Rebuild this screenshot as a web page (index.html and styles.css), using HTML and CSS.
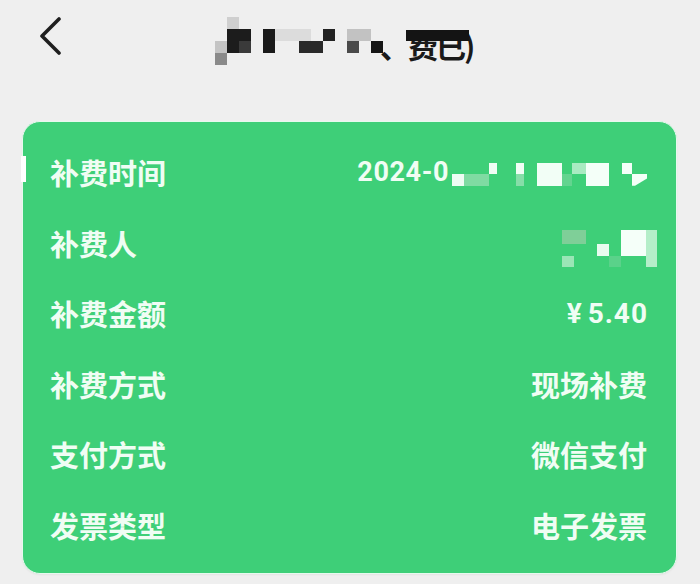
FILE: index.html
```html
<!DOCTYPE html>
<html lang="zh-CN">
<head>
<meta charset="utf-8">
<link rel="stylesheet" href="styles.css">
</head>
<body>
<div class="page">
  <header class="topbar">
    <svg class="back" width="26" height="38" viewBox="0 0 26 38"><path d="M22 2 L5 19 L22 36" fill="none" stroke="#1f1f1f" stroke-width="3.6" stroke-linecap="round" stroke-linejoin="round"/></svg>
    <div class="title">
      <div class="mosaic tmos">
        <i class="t1"></i><i class="t2"></i><i class="t3"></i><i class="t4"></i><i class="t5"></i><i class="t6"></i><i class="t7"></i><i class="t8"></i><i class="t9"></i><i class="t10"></i><i class="t11"></i><i class="t12"></i>
      </div>
      <span class="title-text">、<span class="censored">费已)</span></span>
    </div>
  </header>
  <section class="card">
    <span class="edge-mark"></span>
    <div class="row"><span class="label">补费时间</span><span class="value"><span class="date">2024-0</span><span class="mosaic vmos1"><i class="a1"></i><i class="a2"></i><i class="a3"></i><i class="a4"></i><i class="a5"></i><i class="a6"></i><i class="a7"></i><i class="a8"></i><i class="a9"></i><i class="a10"></i><i class="a11"></i></span></span></div>
    <div class="row"><span class="label">补费人</span><span class="value"><span class="mosaic vmos2"><i class="b1"></i><i class="b2"></i><i class="b3"></i><i class="b4"></i><i class="b5"></i><i class="b6"></i></span></span></div>
    <div class="row"><span class="label">补费金额</span><span class="value"><span class="yen">¥</span><span class="num">5.40</span></span></div>
    <div class="row"><span class="label">补费方式</span><span class="value">现场补费</span></div>
    <div class="row"><span class="label">支付方式</span><span class="value">微信支付</span></div>
    <div class="row"><span class="label">发票类型</span><span class="value">电子发票</span></div>
  </section>
</div>
</body>
</html>
```
FILE: styles.css
```css
html, body {
  margin: 0;
  padding: 0;
  background: #efefef;
  font-family: Roboto, "Noto Sans CJK SC", sans-serif;
}
.page {
  width: 700px;
  height: 584px;
  overflow: hidden;
}
.topbar {
  height: 121px;
  display: flex;
  align-items: flex-start;
}
.back {
  margin: 17px 0 0 37px;
}
.title {
  margin: 17px 0 0 152px;
  display: flex;
  align-items: flex-start;
}
.mosaic { display: grid; }
.mosaic i { display: block; }

/* title mosaic: 14 cols x 12px, 4 rows x 12px */
.tmos {
  grid-template-columns: repeat(14, 12px);
  grid-template-rows: repeat(4, 12px);
}
.t1 { grid-column: 2; grid-row: 1; background: #cfcfcf; }
.t2 { grid-column: 1; grid-row: 3; background: #c4c4c4; }
.t3 { grid-column: 1; grid-row: 4; background: #8a8a8a; }
.t4 { grid-column: 2 / 4; grid-row: 2 / 4; background: #1c1c1c; }
.t5 { grid-column: 5; grid-row: 2 / 4; background: #1a1a1a; }
.t6 { grid-column: 6 / 9; grid-row: 2; background: #dcdcdc; }
.t7 { grid-column: 8 / 10; grid-row: 3; background: #2a2a2a; }
.t8 { grid-column: 10; grid-row: 2; background: #222; }
.t9 { grid-column: 12 / 14; grid-row: 2; background: #c2c2c2; }
.t10 { grid-column: 12; grid-row: 3; background: #4a4a4a; }
.t11 { grid-column: 14; grid-row: 3; background: #151515; }
.t12 { grid-column: 3; grid-row: 3; background: #3a3a3a; }

.title-text {
  font-family: "Noto Sans CJK SC", sans-serif;
  font-size: 30px;
  font-weight: 700;
  color: #1a1a1a;
  line-height: 32px;
  margin: 12px 0 0 -3px;
  letter-spacing: -2px;
}
.censored {
  position: relative;
  display: inline-block;
}
.censored::before {
  content: "";
  position: absolute;
  left: -2px;
  right: 4px;
  top: 1px;
  height: 11px;
  background: #141414;
}

.card {
  position: relative;
  margin-left: 22px;
  width: 655px;
  box-sizing: border-box;
  height: 453px;
  background: #3ecf78;
  border: 1.5px solid #e6faee;
  border-radius: 18px;
  padding: 15px 29px 13px 27px;
  display: flex;
  flex-direction: column;
  box-shadow: 0 1px 2px rgba(0,0,0,0.05);
}
.edge-mark {
  position: absolute;
  left: -2px;
  top: 34px;
  width: 5px;
  height: 26px;
  background: #ffffff;
}
.row {
  height: 70.6px;
  display: flex;
  align-items: center;
  justify-content: space-between;
  color: #f0fdf4;
  font-size: 29px;
}
.label, .value {
  font-family: "Noto Sans CJK SC", sans-serif;
  font-weight: 700;
}
.value {
  display: flex;
  align-items: center;
}
.date {
  font-family: Roboto, sans-serif;
  font-size: 27px;
  font-weight: 700;
  letter-spacing: 0.6px;
  margin-right: 3px;
}
.yen {
  font-family: Roboto, sans-serif;
  font-size: 28px;
  font-weight: 700;
  margin-right: 6px;
}
.num {
  font-family: Roboto, sans-serif;
  font-size: 28px;
  font-weight: 700;
  letter-spacing: 1px;
  margin-right: -1px;
}

/* row 1 value mosaic */
.vmos1 {
  grid-template-columns: 12px 25px 8px 19px 8px 13px 25px 10px 14px 23px 13px 10px 15px;
  grid-template-rows: 11px 12px;
  margin-top: 4px;
}
.a1 { grid-column: 1; grid-row: 2; background: #eefcf3; }
.a2 { grid-column: 2; grid-row: 2; background: #7fdba2; }
.a3 { grid-column: 3; grid-row: 1; background: #f0fdf4; }
.a4 { grid-column: 5; grid-row: 1; background: #f2fef6; }
.a5 { grid-column: 5; grid-row: 2; background: #86dea8; }
.a6 { grid-column: 7; grid-row: 1 / 3; background: #f2fef6; }
.a7 { grid-column: 8; grid-row: 2; background: #63d48f; }
.a8 { grid-column: 9; grid-row: 1; background: #a9ebc1; }
.a9 { grid-column: 10; grid-row: 1 / 3; background: #f4fff8; }
.a10 { grid-column: 12; grid-row: 1; background: #f4fff8; }
.a11 { grid-column: 13; grid-row: 2; background: #f4fff8; clip-path: polygon(0 0, 100% 0, 100% 40%, 20% 100%, 0 100%); }

/* row 2 value mosaic */
.vmos2 {
  grid-template-columns: 12px 12px 11px 12px 12px 25px 11px;
  grid-template-rows: 14px 12px 11px;
  margin: 12px -10px 0 0;
}
.b1 { grid-column: 1 / 3; grid-row: 1; background: #7fcf98; }
.b2 { grid-column: 1; grid-row: 3; background: #9ae6b6; }
.b3 { grid-column: 4; grid-row: 2; background: #e9fbef; }
.b4 { grid-column: 5; grid-row: 3; background: #5ad28a; }
.b5 { grid-column: 6; grid-row: 1 / 3; background: #f5fff9; }
.b6 { grid-column: 7; grid-row: 1 / 4; background: #b5eec9; }
```
